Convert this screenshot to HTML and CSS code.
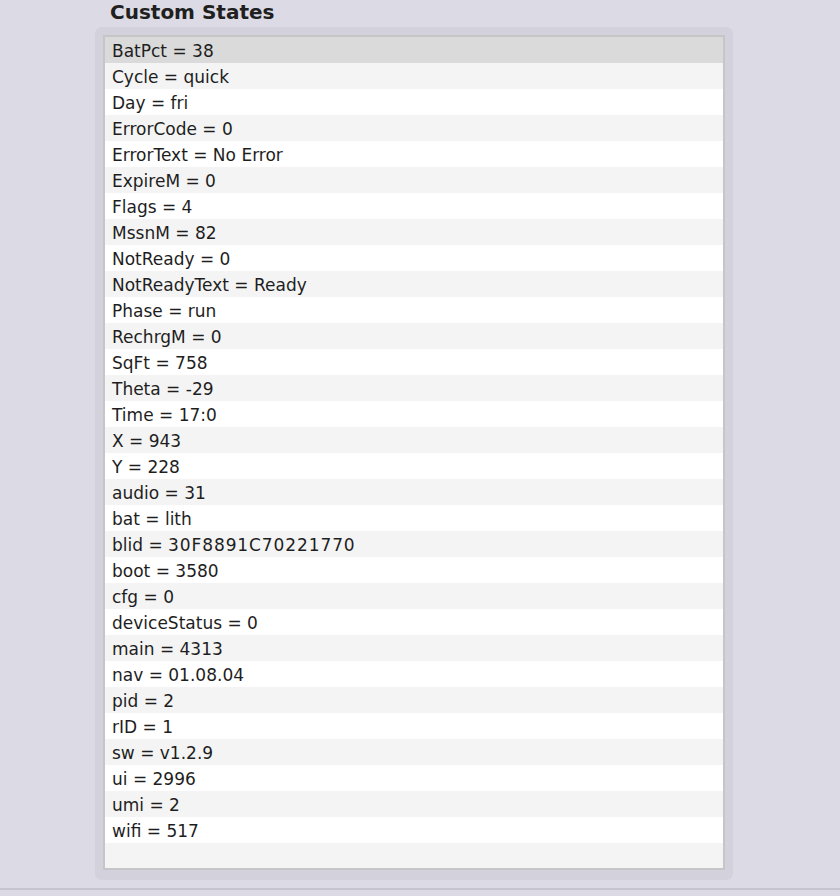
FILE: index.html
```
<!DOCTYPE html>
<html>
<head>
<meta charset="utf-8">
<title>Custom States</title>
<link rel="stylesheet" href="styles.css">
</head>
<body>
<h2 class="section-title">Custom States</h2>
<div class="group">
  <ul class="state-list">
    <li class="row selected">BatPct = 38</li>
    <li class="row">Cycle = quick</li>
    <li class="row">Day = fri</li>
    <li class="row">ErrorCode = 0</li>
    <li class="row">ErrorText = No Error</li>
    <li class="row">ExpireM = 0</li>
    <li class="row">Flags = 4</li>
    <li class="row">MssnM = 82</li>
    <li class="row">NotReady = 0</li>
    <li class="row">NotReadyText = Ready</li>
    <li class="row">Phase = run</li>
    <li class="row">RechrgM = 0</li>
    <li class="row">SqFt = 758</li>
    <li class="row">Theta = -29</li>
    <li class="row">Time = 17:0</li>
    <li class="row">X = 943</li>
    <li class="row">Y = 228</li>
    <li class="row">audio = 31</li>
    <li class="row">bat = lith</li>
    <li class="row">blid = <span class="id">30F8891C70221770</span></li>
    <li class="row">boot = 3580</li>
    <li class="row">cfg = 0</li>
    <li class="row">deviceStatus = 0</li>
    <li class="row">main = 4313</li>
    <li class="row">nav = 01.08.04</li>
    <li class="row">pid = 2</li>
    <li class="row">rID = 1</li>
    <li class="row">sw = v1.2.9</li>
    <li class="row">ui = 2996</li>
    <li class="row">umi = 2</li>
    <li class="row">wifi = 517</li>
    <li class="row empty"></li>
  </ul>
</div>
<div class="footer-rule"></div>
</body>
</html>
```
FILE: styles.css
```
html, body {
  margin: 0;
  padding: 0;
}

body {
  background: #dcdae4;
  font-family: "DejaVu Sans", "Liberation Sans", sans-serif;
  color: #1e1e1e;
  height: 896px;
  overflow: hidden;
}

.section-title {
  margin: 0;
  height: 27px;
  padding-left: 110px;
  font-size: 20px;
  font-weight: bold;
  line-height: 24px;
  color: #202020;
}

.group {
  margin-left: 95px;
  width: 622px;
  padding: 8px 8px 10px 8px;
  background: #d3d1db;
  border-radius: 7px;
}

.state-list {
  list-style: none;
  margin: 0;
  padding: 0;
  height: 831px;
  overflow: hidden;
  background: #fff;
  border: 2px solid #c6c6c8;
}

.row {
  height: 26px;
  box-sizing: border-box;
  padding: 2px 0 0 7px;
  font-size: 17px;
  line-height: 24px;
  white-space: nowrap;
  background: #fff;
}

.row:nth-child(even) {
  background: #f4f4f4;
}

.row.selected {
  background: #dadada;
}

.id {
  letter-spacing: 0.9px;
}

.footer-rule {
  margin-top: 8px;
  height: 0;
  border-top: 2px solid #c6c4ce;
}
```
